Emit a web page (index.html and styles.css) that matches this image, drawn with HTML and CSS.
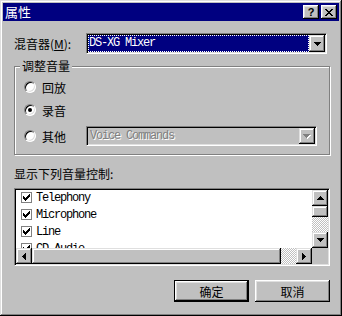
FILE: index.html
```html
<!DOCTYPE html>
<html lang="zh">
<head>
    <meta charset="UTF-8">
    <link rel="stylesheet" href="styles.css">
    <title>属性</title>
</head>
<body>
<div class="window">
    <div class="titlebar">
        <span class="title">属性</span>
        <div class="tbtns">
            <button class="tbtn help">?</button>
            <button class="tbtn">
                <svg width="8" height="7" viewBox="0 0 8 7" shape-rendering="crispEdges"><path d="M0 0h2v1H0zM6 0h2v1H6zM1 1h2v1H1zM5 1h2v1H5zM2 2h4v1H2zM3 3h2v1H3zM2 4h4v1H2zM1 5h2v1H1zM5 5h2v1H5zM0 6h2v1H0zM6 6h2v1H6z" fill="#000"/></svg>
            </button>
        </div>
    </div>
    <div class="body">
        <div class="mixer">
            <label class="mlabel">混音器(<u>M</u>):</label>
            <div class="combo">
                <div class="field"><span class="sel">DS-XG Mixer</span></div>
                <div class="drop"><svg width="7" height="4" viewBox="0 0 7 4" shape-rendering="crispEdges"><path d="M0 0h7v1H0zM1 1h5v1H1zM2 2h3v1H2zM3 3h1v1H3z" fill="#000"/></svg></div>
            </div>
        </div>
        <fieldset class="group">
            <legend>调整音量</legend>
            <div class="opt"><div class="optlbl"><span class="radio"></span>回放</div></div>
            <div class="opt gap1"><div class="optlbl"><span class="radio on"></span>录音</div></div>
            <div class="opt gap2">
                <div class="optlbl"><span class="radio"></span>其他</div>
                <div class="combo dis">
                    <div class="field">Voice Commands</div>
                    <div class="drop"><svg width="8" height="5" viewBox="0 0 8 5" shape-rendering="crispEdges"><path d="M1 1h7v1H1zM2 2h5v1H2zM3 3h3v1H3zM4 4h1v1H4z" fill="#fff"/><path d="M0 0h7v1H0zM1 1h5v1H1zM2 2h3v1H2zM3 3h1v1H3z" fill="#808080"/></svg></div>
                </div>
            </div>
        </fieldset>
        <div class="caption">显示下列音量控制:</div>
        <div class="listbox">
            <div class="items">
                <div class="item"><span class="chk"></span>Telephony</div>
                <div class="item"><span class="chk"></span>Microphone</div>
                <div class="item"><span class="chk"></span>Line</div>
                <div class="item"><span class="chk"></span>CD Audio</div>
            </div>
            <div class="vscroll">
                <div class="sbtn"><svg width="7" height="4" viewBox="0 0 7 4" shape-rendering="crispEdges"><path d="M3 0h1v1H3zM2 1h3v1H2zM1 2h5v1H1zM0 3h7v1H0z" fill="#000"/></svg></div>
                <div class="thumb vthumb"></div>
                <div class="track"></div>
                <div class="sbtn"><svg width="7" height="4" viewBox="0 0 7 4" shape-rendering="crispEdges"><path d="M0 0h7v1H0zM1 1h5v1H1zM2 2h3v1H2zM3 3h1v1H3z" fill="#000"/></svg></div>
            </div>
            <div class="hscroll">
                <div class="sbtn"><svg width="4" height="7" viewBox="0 0 4 7" shape-rendering="crispEdges"><path d="M3 0h1v7H3zM2 1h1v5H2zM1 2h1v3H1zM0 3h1v1H0z" fill="#000"/></svg></div>
                <div class="thumb hthumb"></div>
                <div class="track htrack"></div>
                <div class="sbtn"><svg width="4" height="7" viewBox="0 0 4 7" shape-rendering="crispEdges"><path d="M0 0h1v7H0zM1 1h1v5H1zM2 2h1v3H2zM3 3h1v1H3z" fill="#000"/></svg></div>
            </div>
            <div class="corner"></div>
        </div>
        <div class="buttons">
            <button class="btn default">确定</button>
            <button class="btn">取消</button>
        </div>
    </div>
</div>
</body>
</html>
```

FILE: styles.css
```css
body{margin:0;background:#c0c0c0;color:#000;font:12px "Noto Sans CJK SC",sans-serif}
.window{box-sizing:border-box;width:342px;height:316px;padding:3px;background:#c0c0c0;box-shadow:inset -1px -1px #000,inset 1px 1px #dfdfdf,inset -2px -2px #808080,inset 2px 2px #fff}

/* title bar */
.titlebar{height:18px;background:#000080;display:flex;align-items:center;justify-content:space-between;padding:0 2px}
.title{color:#fff;font-size:13px;line-height:18px}
.tbtns{display:flex;gap:2px}
.tbtn{box-sizing:border-box;width:16px;height:14px;padding:0;border:0;background:#c0c0c0;display:flex;align-items:center;justify-content:center;box-shadow:inset -1px -1px #000,inset 1px 1px #fff,inset -2px -2px #808080,inset 2px 2px #dfdfdf}
.tbtn.help{font:bold 11px "Liberation Sans",sans-serif;line-height:12px}

.body{padding:0 9px 0 11px}

/* sunken + raised bits */
.combo,.listbox{box-sizing:border-box;border:1px solid;border-color:#808080 #fff #fff #808080;box-shadow:inset 1px 1px #000,inset -1px -1px #dfdfdf;padding:1px}
.drop,.sbtn,.thumb{box-sizing:border-box;background:#c0c0c0;box-shadow:inset -1px -1px #000,inset 1px 1px #dfdfdf,inset -2px -2px #808080,inset 2px 2px #fff}

.mixer{display:flex;align-items:center;margin-top:12px;height:21px}
.mlabel{width:72px}
.mlabel u{text-decoration:underline}
.combo{display:flex;height:21px;width:241px;background:#fff}
.combo .field{flex:1;display:flex;font:12px "Liberation Mono",monospace;letter-spacing:-1.2px}
.sel{flex:1;background:#000080;color:#fff;border:1px dotted #fff;padding-left:0;line-height:15px}
.drop{width:16px;display:flex;align-items:center;justify-content:center}

/* group */
.group{margin:5px 0 0;padding:4px 0 8px 9px;border:1px solid #808080;box-shadow:inset 1px 1px #fff,1px 1px #fff}
.group legend{margin-left:-4px;padding:0 2px;line-height:14px;background:#c0c0c0}
.opt{display:flex;align-items:center;height:20px}
.gap1{margin-top:3px}
.gap2{margin-top:6px}
.optlbl{width:62px;display:flex;align-items:center;gap:6px}
.radio{box-sizing:border-box;width:12px;height:12px;border-radius:50%;background:#fff;border:1px solid;border-color:#808080 #fff #fff #808080;box-shadow:inset 1px 1px #000,inset -1px -1px #dfdfdf;display:flex;align-items:center;justify-content:center}
.radio.on::after{content:"";width:4px;height:4px;border-radius:50%;background:#000}
.combo.dis{width:231px;height:20px;background:#c0c0c0}
.combo.dis .field{color:#808080;text-shadow:1px 1px #fff;padding-left:2px;align-items:center}

.caption{margin-top:11px;line-height:16px}

/* list */
.listbox{margin-top:6px;height:78px;background:#fff;display:grid;grid-template-columns:1fr 16px;grid-template-rows:1fr 16px}
.items{overflow:hidden;padding-left:5px;font:12px "Liberation Mono",monospace;letter-spacing:-1.2px}
.item{height:17px;display:flex;align-items:center;gap:4px}
.item:first-child{margin-top:-1px}
.chk{box-sizing:border-box;width:11px;height:11px;border:1px solid #808080;background:#fff url("data:image/svg+xml,%3Csvg xmlns='http://www.w3.org/2000/svg' width='7' height='7' shape-rendering='crispEdges'%3E%3Cpath d='M6 0h1v1H6zM5 1h2v1H5zM0 2h1v1H0zM4 2h3v1H4zM0 3h2v1H0zM3 3h3v1H3zM0 4h5v1H0zM1 5h3v1H1zM2 6h1v1H2z'/%3E%3C/svg%3E") center/7px 7px no-repeat}
.vscroll{display:flex;flex-direction:column;background:#c0c0c0}
.hscroll{display:flex;background:#c0c0c0}
.sbtn{width:16px;height:16px;flex:none;display:flex;align-items:center;justify-content:center}
.vthumb{height:11px;flex:none}
.hthumb{flex:1}
.track{flex:1;background:repeating-conic-gradient(#fff 0 25%,#c0c0c0 0 50%) 0 0/2px 2px}
.htrack{flex:none;width:15px}
.corner{background:#c0c0c0}

/* buttons */
.buttons{display:flex;justify-content:flex-end;gap:6px;margin-top:14px}
.btn{box-sizing:border-box;width:75px;height:22px;padding:0;border:0;background:#c0c0c0;font:12px "Noto Sans CJK SC",sans-serif;color:#000;box-shadow:inset -1px -1px #000,inset 1px 1px #fff,inset -2px -2px #808080,inset 2px 2px #dfdfdf}
.btn.default{border:1px solid #000}
```
